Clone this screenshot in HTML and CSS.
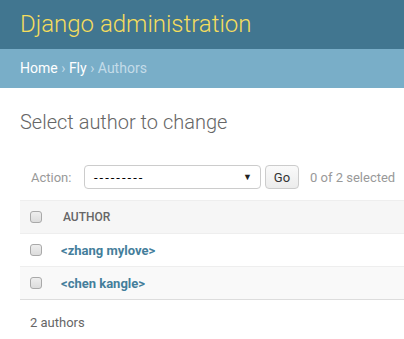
FILE: index.html
```html
<!DOCTYPE html>
<html>
<head>
    <title>Select author to change | Django site admin</title>
    <link rel="stylesheet" href="styles.css">
</head>
<body>
    <div class="header">
        <h1 class="branding">Django administration</h1>
    </div>

    <div class="breadcrumbs">
        <a href="#">Home</a> <span class="sep">›</span> <a href="#">Fly</a> <span class="sep">›</span> <span class="current">Authors</span>
    </div>

    <div class="content">
        <h1 class="title">Select author to change</h1>

        <div class="actions">
            <label class="action-label">Action:</label>
            <div class="select">
                <span class="blank">---------</span>
                <span class="arrow">▼</span>
            </div>
            <button class="go">Go</button>
            <span class="counter">0 of 2 selected</span>
        </div>

        <div class="result-list">
            <div class="row head">
                <span class="check"></span>
                <span class="col-title">Author</span>
            </div>
            <div class="row">
                <span class="check"></span>
                <a class="item" href="#">&lt;zhang mylove&gt;</a>
            </div>
            <div class="row alt">
                <span class="check"></span>
                <a class="item" href="#">&lt;chen kangle&gt;</a>
            </div>
        </div>

        <p class="paginator">2 authors</p>
    </div>
</body>
</html>
```

FILE: styles.css
```css
body { margin: 0; font-family: Roboto, "Liberation Sans", Arial, sans-serif; font-size: 13px; color: #333; background: #fff; }
a { text-decoration: none; }

.header { background: #417690; padding: 10px 20px; height: 29px; }
.branding { margin: 0; font-size: 24px; line-height: 29px; font-weight: 300; color: #f5dd5d; }

.breadcrumbs { background: #79aec8; padding: 10px 20px; font-size: 14px; line-height: 19px; color: #c4dce8; }
.breadcrumbs a { color: #fff; }
.breadcrumbs .sep { color: #c4dce8; }

.content { padding: 22px 0 0 20px; }
.title { margin: 0 0 31px; font-size: 20px; line-height: 24px; font-weight: 300; color: #666; }

.actions { display: flex; align-items: center; height: 24px; padding-left: 11px; margin-bottom: 11px; color: #999; }
.action-label { width: 53px; }
.select { box-sizing: border-box; display: flex; justify-content: space-between; align-items: center; width: 177px; height: 24px; padding: 0 8px 0 9px; border: 1px solid #ccc; border-radius: 4px; color: #000; background: #fff; }
.select .blank { letter-spacing: 2px; }
.select .arrow { font-size: 9px; color: #222; }
.go { box-sizing: border-box; width: 34px; height: 24px; margin-left: 4px; padding: 0; border: 1px solid #ccc; border-radius: 4px; background: linear-gradient(#fafafa, #ececec); font-family: inherit; font-size: 13px; color: #333; }
.counter { margin-left: 11px; color: #999; }

.result-list { border-top: 1px solid #eee; border-bottom: 1px solid #ddd; }
.row { display: flex; align-items: center; height: 32px; border-bottom: 1px solid #eee; background: #fff; }
.row:last-child { border-bottom: none; }
.row.head { background: #f6f6f6; }
.row.alt { background: #f9f9f9; }
.check { box-sizing: border-box; width: 12px; height: 12px; margin: 0 19px 0 10px; border: 1px solid #a9a9a9; border-radius: 3px; background: linear-gradient(#eee, #dcdcdc); }
.col-title { margin-left: 2px; font-size: 12px; font-weight: 500; text-transform: uppercase; color: #666; }
.item { font-weight: 700; color: #447e9b; }

.paginator { margin: 0; padding: 12px 10px; line-height: 22px; color: #666; }
```
